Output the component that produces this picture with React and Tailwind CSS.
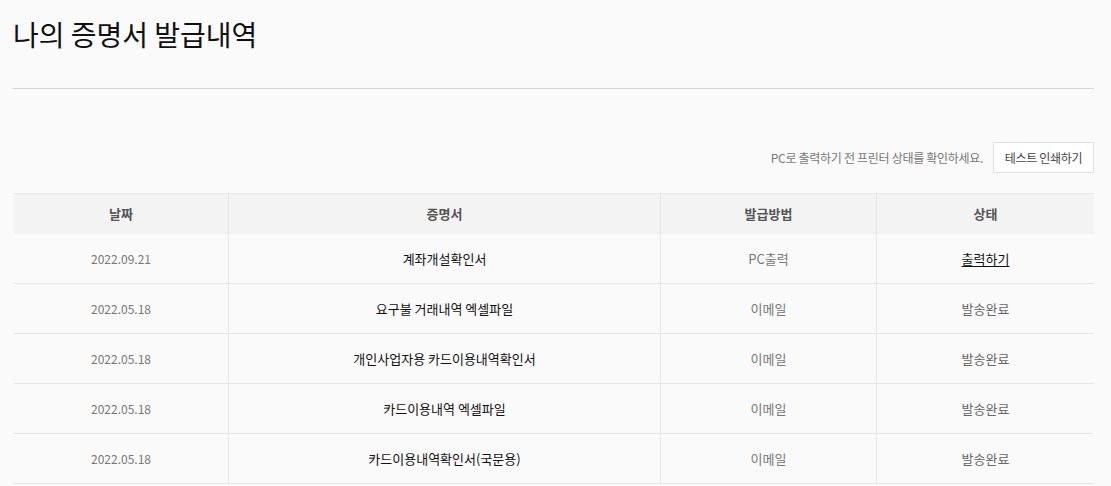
import React from "react";

const rows = [
  { date: "2022.09.21", name: "계좌개설확인서", method: "PC출력", status: "출력하기", link: true },
  { date: "2022.05.18", name: "요구불 거래내역 엑셀파일", method: "이메일", status: "발송완료" },
  { date: "2022.05.18", name: "개인사업자용 카드이용내역확인서", method: "이메일", status: "발송완료" },
  { date: "2022.05.18", name: "카드이용내역 엑셀파일", method: "이메일", status: "발송완료" },
  { date: "2022.05.18", name: "카드이용내역확인서(국문용)", method: "이메일", status: "발송완료" },
];

export default function App() {
  return (
    <div
      className="w-[1111px] h-[486px] overflow-hidden bg-[#fafafa] pl-[13px] pr-[17px]"
      style={{ fontFamily: '"Noto Sans CJK KR", "Noto Sans", sans-serif' }}
    >
      <h1 className="pt-[14px] h-[88px] text-[28px] leading-[40px] text-[#111] font-normal tracking-[0px]">
        나의 증명서 발급내역
      </h1>
      <div className="h-px bg-[#d6d6d6]" />
      <div className="flex items-center justify-end gap-[10px] mt-[53px] pl-px">
        <span className="text-[12px] text-[#777] tracking-[-0.3px]">PC로 출력하기 전 프린터 상태를 확인하세요.</span>
        <button className="w-[101px] h-[31px] bg-white border border-[#e0e0e0] text-[12px] font-normal text-[#444] tracking-[-0.3px]">
          테스트 인쇄하기
        </button>
      </div>
      <div className="mt-[20px] ml-px border-t border-[#e8e8e8]">
        <div className="grid grid-cols-[215px_432px_216px_1fr] h-[40px] bg-[#f3f3f3] text-[13px] font-bold text-[#555]">
          <div className="flex items-center justify-center border-r border-[#e4e4e4]">날짜</div>
          <div className="flex items-center justify-center border-r border-[#e4e4e4]">증명서</div>
          <div className="flex items-center justify-center border-r border-[#e4e4e4]">발급방법</div>
          <div className="flex items-center justify-center">상태</div>
        </div>
        {rows.map((r, i) => (
          <div
            key={i}
            className="grid grid-cols-[215px_432px_216px_1fr] h-[50px] border-b border-[#e6e6e6]"
          >
            <div className="flex items-center justify-center border-r border-[#e6e6e6] text-[12px] text-[#777]">{r.date}</div>
            <div className="flex items-center justify-center border-r border-[#e6e6e6] text-[13px] text-[#111]">{r.name}</div>
            <div className="flex items-center justify-center border-r border-[#e6e6e6] text-[13px] text-[#777]">{r.method}</div>
            <div className="flex items-center justify-center text-[13px]">
              {r.link ? (
                <span className="text-[#111] underline underline-offset-2">{r.status}</span>
              ) : (
                <span className="text-[#666]">{r.status}</span>
              )}
            </div>
          </div>
        ))}
      </div>
    </div>
  );
}
